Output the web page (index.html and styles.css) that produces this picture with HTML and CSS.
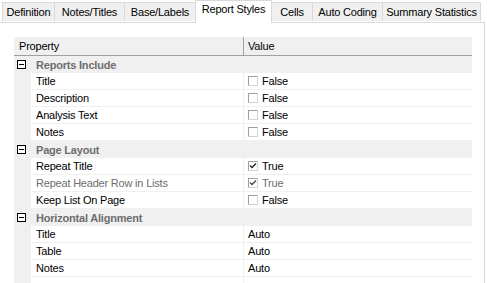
FILE: index.html
```html
<!DOCTYPE html>
<html lang="en">
    <head>
        <link rel="stylesheet" href="styles.css">
        <meta charset="UTF-8" />
        <title>Report Styles</title>
    </head>
    <body>
        <div class="tabs">
            <div class="tab" style="width: 53px">Definition</div>
            <div class="tab" style="width: 70px">Notes/Titles</div>
            <div class="tab" style="width: 71px">Base/Labels</div>
            <div class="tab active" style="width: 77px">Report Styles</div>
            <div class="tab" style="width: 41px">Cells</div>
            <div class="tab" style="width: 70px">Auto Coding</div>
            <div class="tab" style="width: 98px">Summary Statistics</div>
        </div>

        <div class="page">
            <div class="grid">
                <div class="header">
                    <div class="head-prop">Property</div>
                    <div class="head-value">Value</div>
                </div>

                <!-- Reports Include -->
                <div class="category">
                    <span class="toggle"><svg width="9" height="9" viewBox="0 0 9 9"><rect x="0.5" y="0.5" width="8" height="8" fill="#fff" stroke="#000"/><path d="M2 4.5h5" stroke="#000"/></svg></span>
                    <span class="cat-name">Reports Include</span>
                </div>
                <div class="row">
                    <div class="margin"></div>
                    <div class="prop">Title</div>
                    <div class="value"><span class="check"></span>False</div>
                </div>
                <div class="row">
                    <div class="margin"></div>
                    <div class="prop">Description</div>
                    <div class="value"><span class="check"></span>False</div>
                </div>
                <div class="row">
                    <div class="margin"></div>
                    <div class="prop">Analysis Text</div>
                    <div class="value"><span class="check"></span>False</div>
                </div>
                <div class="row">
                    <div class="margin"></div>
                    <div class="prop">Notes</div>
                    <div class="value"><span class="check"></span>False</div>
                </div>

                <!-- Page Layout -->
                <div class="category">
                    <span class="toggle"><svg width="9" height="9" viewBox="0 0 9 9"><rect x="0.5" y="0.5" width="8" height="8" fill="#fff" stroke="#000"/><path d="M2 4.5h5" stroke="#000"/></svg></span>
                    <span class="cat-name">Page Layout</span>
                </div>
                <div class="row">
                    <div class="margin"></div>
                    <div class="prop">Repeat Title</div>
                    <div class="value"><span class="check on"><svg width="8" height="8" viewBox="0 0 8 8"><path d="M1 3.5l2 2 4-4" fill="none" stroke="#222" stroke-width="1.3"/></svg></span>True</div>
                </div>
                <div class="row disabled">
                    <div class="margin"></div>
                    <div class="prop">Repeat Header Row in Lists</div>
                    <div class="value"><span class="check on"><svg width="8" height="8" viewBox="0 0 8 8"><path d="M1 3.5l2 2 4-4" fill="none" stroke="#444" stroke-width="1.3"/></svg></span>True</div>
                </div>
                <div class="row">
                    <div class="margin"></div>
                    <div class="prop">Keep List On Page</div>
                    <div class="value"><span class="check"></span>False</div>
                </div>

                <!-- Horizontal Alignment -->
                <div class="category">
                    <span class="toggle"><svg width="9" height="9" viewBox="0 0 9 9"><rect x="0.5" y="0.5" width="8" height="8" fill="#fff" stroke="#000"/><path d="M2 4.5h5" stroke="#000"/></svg></span>
                    <span class="cat-name">Horizontal Alignment</span>
                </div>
                <div class="row">
                    <div class="margin"></div>
                    <div class="prop">Title</div>
                    <div class="value">Auto</div>
                </div>
                <div class="row">
                    <div class="margin"></div>
                    <div class="prop">Table</div>
                    <div class="value">Auto</div>
                </div>
                <div class="row">
                    <div class="margin"></div>
                    <div class="prop">Notes</div>
                    <div class="value">Auto</div>
                </div>
                <div class="row filler">
                    <div class="margin"></div>
                    <div class="prop"></div>
                    <div class="value"></div>
                </div>
            </div>
        </div>
    </body>
</html>
```

FILE: styles.css
```css
html, body {
    margin: 0;
    height: 100%;
    overflow: hidden;
}

body {
    background-color: #fff;
    font-family: "Liberation Sans", Arial, sans-serif;
    font-size: 11px;
    letter-spacing: -0.2px;
    color: #000;
}

/* Tab strip */
.tabs {
    display: flex;
    align-items: flex-end;
    height: 22px;
    padding-left: 2px;
}

.tab {
    box-sizing: border-box;
    height: 19px;
    margin-bottom: 1px;
    border: 1px solid #d9d9d9;
    border-bottom: none;
    border-left: none;
    background-color: #f0f0f0;
    text-align: center;
    line-height: 18px;
}

.tab:first-child {
    border-left: 1px solid #d9d9d9;
}

.tab.active {
    height: 23px;
    margin-bottom: -1px;
    margin-left: -1px;
    border-left: 1px solid #d9d9d9;
    background-color: #fff;
    line-height: 17px;
    position: relative;
}

.page {
    box-sizing: border-box;
    width: 485px;
    height: 262px;
    border-top: 1px solid #d9d9d9;
    border-right: 1px solid #d9d9d9;
    padding: 14px 0 0 14px;
}

/* Property grid */
.grid {
    width: 458px;
}

.header {
    display: flex;
    height: 18px;
    background-color: #f0f0f0;
    border-bottom: 1px solid #a0a0a0;
    line-height: 18px;
}

.head-prop {
    width: 230px;
    padding-left: 5px;
    box-sizing: border-box;
    border-right: 1px solid #a0a0a0;
}

.head-value {
    padding-left: 4px;
}

.category {
    display: flex;
    align-items: center;
    height: 17px;
    background-color: #f0f0f0;
}

.toggle {
    display: flex;
    width: 17px;
    padding-left: 3px;
    box-sizing: border-box;
}

.cat-name {
    padding-left: 5px;
    font-weight: bold;
    color: #6d6d6d;
}

.row {
    display: flex;
    height: 17px;
    line-height: 16px;
}

.margin {
    width: 17px;
    background-color: #f0f0f0;
}

.prop {
    width: 213px;
    box-sizing: border-box;
    padding-left: 5px;
    border-right: 1px solid #f0f0f0;
    border-bottom: 1px solid #f0f0f0;
    white-space: nowrap;
}

.value {
    flex: 1;
    display: flex;
    align-items: center;
    height: 16px;
    padding-left: 4px;
    border-bottom: 1px solid #f0f0f0;
}

.disabled .prop,
.disabled .value {
    color: #6d6d6d;
}

.filler .prop,
.filler .value {
    border-bottom: none;
}

/* Checkboxes */
.check {
    display: flex;
    align-items: center;
    justify-content: center;
    box-sizing: border-box;
    width: 10px;
    height: 10px;
    margin-right: 4px;
    border: 1px solid #a0a0a0;
    border-right-color: #d4d4d4;
    border-bottom-color: #d4d4d4;
    background-color: #fff;
}
```
